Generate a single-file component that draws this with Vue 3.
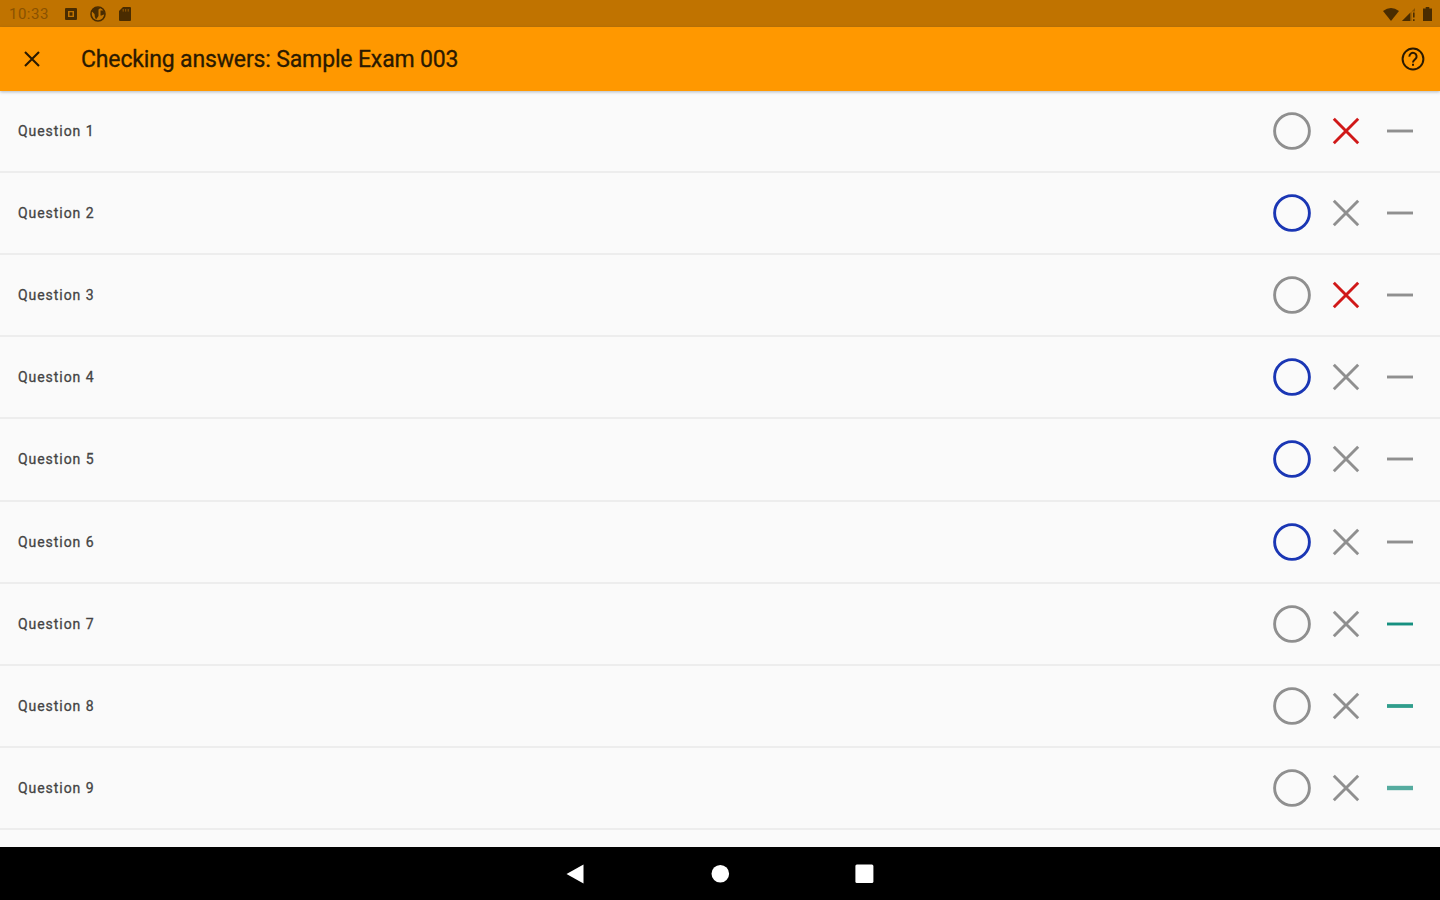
<template>
  <div class="screen">
    <!-- status bar -->
    <div class="status-bar">
      <span class="clock">10:33</span>
      <svg class="status-icon" width="12" height="12" viewBox="0 0 12 12">
        <path fill-rule="evenodd" d="M1 0H11Q12 0 12 1V11Q12 12 11 12H1Q0 12 0 11V1Q0 0 1 0ZM3 3V9H9V3ZM4.5 4.2H7.5V7.8H4.5Z" fill="currentColor" />
      </svg>
      <svg class="status-icon profile" width="16" height="16" viewBox="0 0 16 16">
        <circle cx="8" cy="8" r="7" fill="none" stroke="currentColor" stroke-width="1.6" />
        <path d="M1.5 5L5 1.5H11L8.5 3.5V10L6 13.5Q4.5 11 4.5 8Z" fill="currentColor" />
        <path d="M10.5 4.5H13.5L15 8L11.5 9.5H10.5Z" fill="currentColor" />
      </svg>
      <svg class="status-icon card" width="12" height="14" viewBox="0 0 12 14">
        <path d="M4 0H11Q12 0 12 1V13Q12 14 11 14H1Q0 14 0 13V4Z" fill="currentColor" />
        <path d="M4.2 2V4.6M6.7 2V4.6M9.2 2V4.6" stroke="#9a5c00" stroke-width="1" />
      </svg>
      <div class="status-right">
        <svg width="16" height="13" viewBox="0 0 16 13">
          <path d="M0 3Q8 -3 16 3L8 13Z" fill="currentColor" />
        </svg>
        <svg class="signal" width="13" height="13" viewBox="0 0 13 13">
          <path d="M0 13L13 0V3.5H9.5V13Z" fill="currentColor" opacity="0.45" />
          <path d="M0 13L8 5V13Z" fill="currentColor" />
          <path d="M11.8 4.5V9.5M11.8 11.2V13" stroke="currentColor" stroke-width="1.6" />
        </svg>
        <svg class="battery" width="9" height="14" viewBox="0 0 9 14">
          <path d="M2.7 0H6.3V1.4H9V14H0V1.4H2.7Z" fill="currentColor" />
        </svg>
      </div>
    </div>

    <!-- app bar -->
    <header class="app-bar">
      <button class="icon-button" aria-label="Close">
        <svg width="16" height="16" viewBox="0 0 16 16">
          <path d="M1 1L15 15M15 1L1 15" stroke="currentColor" stroke-width="2.1" />
        </svg>
      </button>
      <h1 class="title">{{ title }}</h1>
      <button class="icon-button help" aria-label="Help">
        <svg width="24" height="24" viewBox="0 0 24 24">
          <circle cx="12" cy="12" r="10.4" fill="none" stroke="currentColor" stroke-width="2" />
          <path d="M8.4 9.6A3.6 3.6 0 1 1 14.4 12.1C13 13.4 12 13.8 12 15.6" fill="none" stroke="currentColor" stroke-width="2" />
          <path d="M11 16.8H13V18.8H11Z" fill="currentColor" />
        </svg>
      </button>
    </header>

    <!-- question list -->
    <main class="list">
      <div v-for="question in questions" :key="question.id" class="row">
        <span class="label">Question {{ question.id }}</span>
        <div class="marks">
          <button class="mark" :class="{ correct: question.answer === 'correct' }" aria-label="Correct" @click="question.answer = 'correct'">
            <svg width="40" height="40" viewBox="0 0 40 40">
              <circle cx="20" cy="20" r="17.4" />
            </svg>
          </button>
          <button class="mark" :class="{ wrong: question.answer === 'wrong' }" aria-label="Wrong" @click="question.answer = 'wrong'">
            <svg width="40" height="40" viewBox="0 0 40 40">
              <path d="M7.8 7.8L32.2 32.2M32.2 7.8L7.8 32.2" />
            </svg>
          </button>
          <button class="mark" :class="{ skipped: question.answer === 'skipped' }" aria-label="Skipped" @click="question.answer = 'skipped'">
            <svg width="40" height="40" viewBox="0 0 40 40">
              <path d="M7 20H33" />
            </svg>
          </button>
        </div>
      </div>
    </main>

    <!-- system navigation -->
    <nav class="nav-bar">
      <svg width="20" height="20" viewBox="0 0 20 20"><path d="M0.5 10L17.5 0.5V19.5Z" /></svg>
      <svg width="20" height="20" viewBox="0 0 20 20"><circle cx="10.3" cy="9.7" r="8.8" /></svg>
      <svg width="20" height="20" viewBox="0 0 20 20"><rect x="1.4" y="0.4" width="18" height="18.6" rx="1.5" /></svg>
    </nav>
  </div>
</template>

<script setup>
import { ref } from 'vue'

const title = 'Checking answers: Sample Exam 003'

const questions = ref([
  { id: 1, answer: 'wrong' },
  { id: 2, answer: 'correct' },
  { id: 3, answer: 'wrong' },
  { id: 4, answer: 'correct' },
  { id: 5, answer: 'correct' },
  { id: 6, answer: 'correct' },
  { id: 7, answer: 'skipped' },
  { id: 8, answer: 'skipped' },
  { id: 9, answer: 'skipped' }
])
</script>

<style>
body {
  margin: 0;
  overflow: hidden;
}
</style>

<style scoped>
.screen {
  display: flex;
  flex-direction: column;
  width: 1440px;
  height: 900px;
  overflow: hidden;
  background: #fafafa;
  font-family: Roboto, "Liberation Sans", sans-serif;
}

svg {
  display: block;
}

button {
  display: flex;
  align-items: center;
  justify-content: center;
  padding: 0;
  border: none;
  background: none;
  cursor: pointer;
}

/* status bar */
.status-bar {
  display: flex;
  align-items: center;
  box-sizing: border-box;
  flex: none;
  height: 27px;
  padding: 1px 7px 0 9px;
  background: #c07300;
  color: #4a2c00;
}

.clock {
  width: 56px;
  font-size: 15px;
  letter-spacing: 0.5px;
  color: #8a5200;
}

.status-icon.profile {
  margin-left: 13px;
}

.status-icon.card {
  margin-left: 13px;
}

.status-right {
  display: flex;
  align-items: center;
  margin-left: auto;
}

.signal {
  margin-left: 3px;
}

.battery {
  margin-left: 8px;
  margin-right: 1px;
}

/* app bar */
.app-bar {
  display: flex;
  align-items: center;
  position: relative;
  box-sizing: border-box;
  flex: none;
  height: 63.9px;
  padding: 0 15px 0 20px;
  background: #ff9800;
  color: #2b1a00;
  box-shadow: 0 1px 3px rgba(40, 60, 90, 0.35);
}

.icon-button {
  width: 24px;
  height: 24px;
  color: inherit;
}

.title {
  margin: 0 0 0 37px;
  padding-top: 3px;
  font-size: 23px;
  font-weight: 400;
  line-height: 28px;
  letter-spacing: -0.15px;
  white-space: nowrap;
  -webkit-text-stroke: 0.3px currentColor;
}

.help {
  margin-left: auto;
}

/* question list */
.list {
  flex: 1;
  min-height: 0;
  overflow: hidden;
}

.row {
  display: flex;
  align-items: center;
  justify-content: space-between;
  box-sizing: border-box;
  height: 82.14px;
  padding: 0 20px 0 18px;
  border-bottom: 2px solid #ededed;
}

.label {
  font-size: 14px;
  letter-spacing: 0.95px;
  color: #444;
  -webkit-text-stroke: 0.3px currentColor;
}

.marks {
  display: flex;
  gap: 14px;
}

.mark {
  width: 40px;
  height: 40px;
  color: #8f8f8f;
}

.mark svg {
  fill: none;
  stroke: currentColor;
  stroke-width: 2.9;
}

.mark.correct {
  color: #1a36b4;
}

.mark.wrong {
  color: #d01818;
}

.mark.skipped {
  color: #169080;
}

.row:nth-child(8) .mark.skipped {
  color: #2f9d8c;
}

.row:nth-child(8) .mark.skipped svg {
  stroke-width: 3.8;
}

.row:nth-child(9) .mark.skipped {
  color: #55ab9f;
}

.row:nth-child(9) .mark.skipped svg {
  stroke-width: 4.4;
}

/* system navigation */
.nav-bar {
  display: flex;
  align-items: center;
  justify-content: center;
  gap: 124px;
  flex: none;
  height: 53px;
  background: #000;
}

.nav-bar svg {
  fill: #fff;
}
</style>
